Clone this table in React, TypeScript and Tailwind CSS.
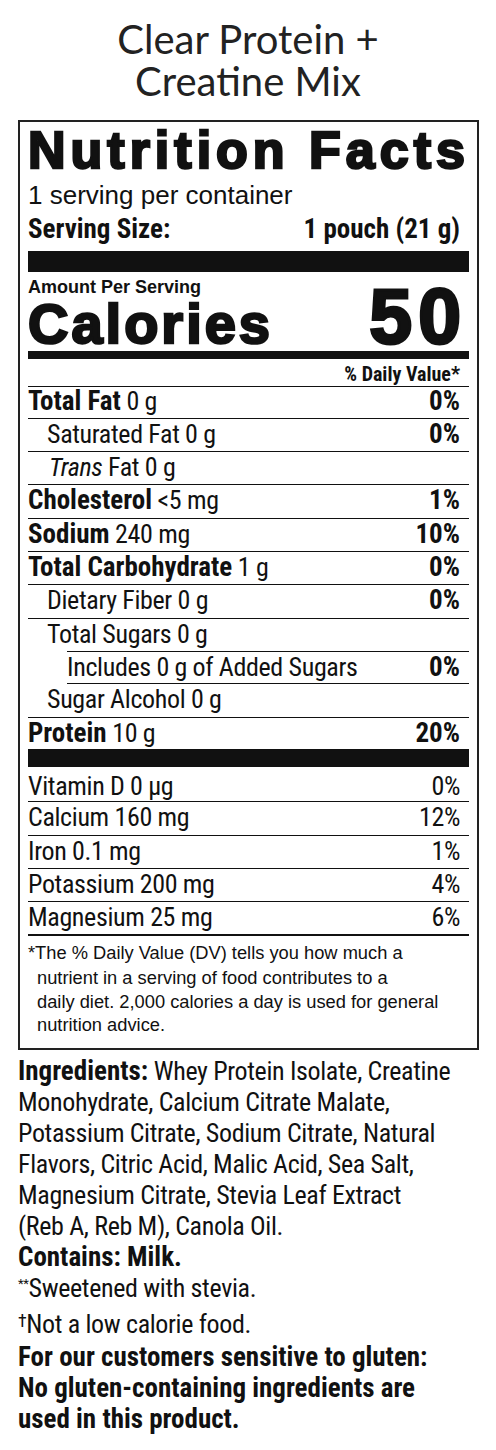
const cond = "font-['Roboto','Liberation_Sans',sans-serif] font-stretch-condensed text-[26px] tracking-[-0.35px]";
const b = "font-bold text-[27px] tracking-normal";
const sans = "font-['Liberation_Sans',Arial,sans-serif]";
const heavy = "font-['Liberation_Sans',Arial,sans-serif] font-bold";

type RowProps = {
  name: string;
  amount?: string;
  dv?: string;
  bold?: boolean;
  italicName?: boolean;
  indent?: string;
  className?: string;
};

function Row({ name, amount, dv, bold, italicName, indent = "pl-0", className = "h-[33.33px] border-b border-[#111]" }: RowProps) {
  return (
    <div className={`flex justify-between leading-[31px] ${className}`}>
      <span className={indent}>
        <span className={bold ? b : italicName ? "italic" : ""}>{name}</span>
        {amount ? ` ${amount}` : ""}
      </span>
      {dv && <span className={`pr-[9px] ${b}`}>{dv}</span>}
    </div>
  );
}

function Mineral({ name, dv, className = "h-[33.3px] border-b border-[#111]" }: { name: string; dv: string; className?: string }) {
  return (
    <div className={`flex justify-between leading-[31px] ${className}`}>
      <span>{name}</span>
      <span className="pr-[9px]">{dv}</span>
    </div>
  );
}

export default function App() {
  return (
    <div className="w-[496px] min-h-[1450px] bg-white text-[#111]">
      <div className="pt-[18px] text-center font-['Lato',sans-serif] text-[40px] leading-[42px] text-[#222]">
        Clear Protein +
        <br />
        Creatine Mix
      </div>

      <div className="mt-[18px] ml-[18px] w-[461px] border-2 border-[#222] px-[8px]">
        <div className={`${heavy} h-[58px] text-[52px] leading-[56px] tracking-[5px] whitespace-nowrap [-webkit-text-stroke:2.5px_#111]`}>
          Nutrition Facts
        </div>
        <div className={`${sans} text-[26px] leading-[30px]`}>1 serving per container</div>
        <div className={`${cond} mt-[4px] flex justify-between leading-[30px] ${b}`}>
          <span>Serving Size:</span>
          <span className="pr-[9px]">1 pouch (21 g)</span>
        </div>
        <div className="mt-[7px] h-[21px] bg-[#111]" />

        <div className={`${sans} mt-[5px] text-[18px] font-bold leading-[20px]`}>Amount Per Serving</div>
        <div className="flex h-[54px] items-baseline justify-between">
          <span className={`${heavy} text-[56px] leading-[54px] tracking-[3px] [-webkit-text-stroke:2.5px_#111]`}>Calories</span>
          <span className={`${heavy} pr-[2px] text-[77px] leading-[38px] tracking-[6px] [-webkit-text-stroke:3px_#111]`}>50</span>
        </div>
        <div className="h-[8px] bg-[#111]" />

        <div className={cond}>
          <div className="h-[28px] border-b border-[#111] pt-[4px] pr-[9px] text-right text-[20px] font-bold leading-[22px] tracking-normal">
            % Daily Value*
          </div>
          <Row name="Total Fat" amount="0 g" dv="0%" bold className="h-[31.7px] border-b border-[#111] !leading-[29px]" />
          <Row name="Saturated Fat" amount="0 g" dv="0%" indent="pl-[19px]" />
          <Row name="Trans" amount="Fat 0 g" italicName indent="pl-[21px]" />
          <Row name="Cholesterol" amount="<5 mg" dv="1%" bold />
          <Row name="Sodium" amount="240 mg" dv="10%" bold />
          <Row name="Total Carbohydrate" amount="1 g" dv="0%" bold />
          <Row name="Dietary Fiber" amount="0 g" dv="0%" indent="pl-[19px]" />
          <Row name="Total Sugars" amount="0 g" indent="pl-[19px]" className="h-[32.33px]" />
          <Row name="Includes 0 g of Added Sugars" dv="0%" indent="pl-0" className="ml-[39px] h-[33.33px] border-y border-[#111]" />
          <Row name="Sugar Alcohol" amount="0 g" indent="pl-[19px]" />
          <Row name="Protein" amount="10 g" dv="20%" bold className="h-[31.5px]" />
          <div className="h-[18px] bg-[#111]" />

          <Mineral name="Vitamin D 0 µg" dv="0%" className="h-[35.3px] border-b border-[#111] pt-[4px]" />
          <Mineral name="Calcium 160 mg" dv="12%" />
          <Mineral name="Iron 0.1 mg" dv="1%" />
          <Mineral name="Potassium 200 mg" dv="4%" />
          <Mineral name="Magnesium 25 mg" dv="6%" className="h-[33.3px] border-b-2 border-[#111]" />
        </div>

        <div className={`${sans} pt-[5px] pb-[12px] pl-[9px] text-[18.3px] leading-[23.3px] whitespace-nowrap`}>
          <div className="-ml-[9px] mb-[2.5px]">*The % Daily Value (DV) tells you how much a</div>
          <div>nutrient in a serving of food contributes to a</div>
          <div>daily diet. 2,000 calories a day is used for general</div>
          <div>nutrition advice.</div>
        </div>
      </div>

      <div className={`${cond} mt-[5.5px] px-[18px] leading-[31.1px] whitespace-nowrap`}>
        <div>
          <span className={b}>Ingredients:</span> Whey Protein Isolate, Creatine
        </div>
        <div>Monohydrate, Calcium Citrate Malate,</div>
        <div>Potassium Citrate, Sodium Citrate, Natural</div>
        <div>Flavors, Citric Acid, Malic Acid, Sea Salt,</div>
        <div>Magnesium Citrate, Stevia Leaf Extract</div>
        <div>(Reb A, Reb M), Canola Oil.</div>
        <div className={b}>Contains: Milk.</div>
        <div>
          <span className="relative -top-[9px] text-[13px]">**</span>Sweetened with stevia.
        </div>
        <div>
          <span className="relative -top-[6px] text-[18px]">†</span>Not a low calorie food.
        </div>
        <div className={b}>For our customers sensitive to gluten:</div>
        <div className={b}>No gluten-containing ingredients are</div>
        <div className={b}>used in this product.</div>
      </div>
    </div>
  );
}
